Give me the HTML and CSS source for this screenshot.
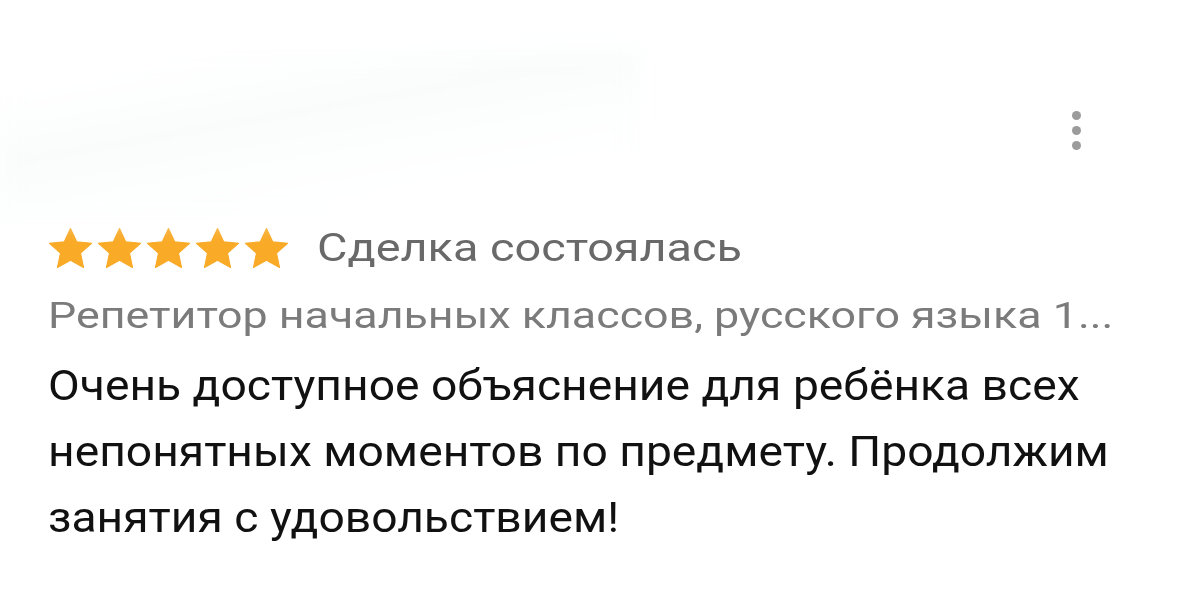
FILE: index.html
```html
<!DOCTYPE html>
<html lang="ru">
<head>
    <meta charset="UTF-8">
    <meta name="viewport" content="width=device-width, initial-scale=1.0">
    <title>Отзыв</title>
    <link rel="stylesheet" href="styles.css">
</head>
<body>
    <div class="review">
        <!-- author block, hidden under a blur -->
        <div class="review-head">
            <div class="author"></div>
            <button class="menu-btn" aria-label="Меню">
                <span></span><span></span><span></span>
            </button>
        </div>

        <div class="rating-row">
            <div class="stars">
                <svg viewBox="0 0 24 23" preserveAspectRatio="none"><path d="M12 .8l3.29 7.27 7.93.88-5.89 5.38 1.61 7.82L12 18.2l-6.94 3.95 1.61-7.82L.78 8.95l7.93-.88z"/></svg>
                <svg viewBox="0 0 24 23" preserveAspectRatio="none"><path d="M12 .8l3.29 7.27 7.93.88-5.89 5.38 1.61 7.82L12 18.2l-6.94 3.95 1.61-7.82L.78 8.95l7.930-.88z"/></svg>
                <svg viewBox="0 0 24 23" preserveAspectRatio="none"><path d="M12 .8l3.29 7.27 7.93.88-5.89 5.38 1.61 7.82L12 18.2l-6.94 3.95 1.61-7.82L.78 8.95l7.93-.88z"/></svg>
                <svg viewBox="0 0 24 23" preserveAspectRatio="none"><path d="M12 .8l3.29 7.27 7.93.88-5.89 5.38 1.61 7.82L12 18.2l-6.94 3.95 1.61-7.82L.78 8.95l7.93-.88z"/></svg>
                <svg viewBox="0 0 24 23" preserveAspectRatio="none"><path d="M12 .8l3.29 7.27 7.93.88-5.89 5.38 1.61 7.82L12 18.2l-6.94 3.95 1.61-7.82L.78 8.95l7.93-.88z"/></svg>
            </div>
            <span class="deal">Сделка состоялась</span>
        </div>

        <div class="service">Репетитор начальных классов, русского языка 1...</div>

        <p class="text">Очень доступное объяснение для ребёнка всех<br>непонятных моментов по предмету. Продолжим<br>занятия с удовольствием!</p>
    </div>
</body>
</html>
```

FILE: styles.css
```css
body {
    margin: 0;
    background: #fff;
    font-family: Roboto, "Noto Sans", Arial, sans-serif;
}
.review {
    padding: 0 96px 0 48px;
}
.review-head {
    height: 226px;
    display: flex;
    justify-content: space-between;
    align-items: flex-start;
}
.author {
    width: 640px;
    height: 170px;
    margin: 50px 0 0 -48px;
    background: linear-gradient(170deg, #fff 15%, #fafcfc 40%, #fdfefe 60%, #fff 78%);
    filter: blur(10px);
}
.menu-btn {
    margin-top: 111px;
    padding: 0;
    border: none;
    background: none;
    display: flex;
    flex-direction: column;
    gap: 6px;
    width: 10px;
}
.menu-btn span {
    width: 9px;
    height: 9px;
    border-radius: 50%;
    background: #9b9b9b;
}
.rating-row {
    display: flex;
    align-items: center;
    height: 44px;
}
.stars {
    display: flex;
    gap: 4px;
    margin-right: 28px;
}
.stars svg {
    width: 45px;
    height: 42px;
    fill: #f9aa27;
    stroke: #f9aa27;
    stroke-width: 0.6;
    stroke-linejoin: round;
}
/* the card's text is set a little wider than the font itself */
.deal,
.service,
.text {
    transform-origin: 0 50%;
}
.deal {
    font-size: 39px;
    color: #696969;
    transform: scaleX(1.2);
}
.service {
    width: max-content;
    margin-top: 24px;
    font-size: 37px;
    line-height: 44px;
    color: #7b7b7b;
    white-space: nowrap;
    transform: scaleX(1.21);
}
.text {
    width: max-content;
    margin: 15px 0 0;
    font-size: 42px;
    line-height: 66px;
    color: #111;
    transform: scaleX(1.1);
}
```
